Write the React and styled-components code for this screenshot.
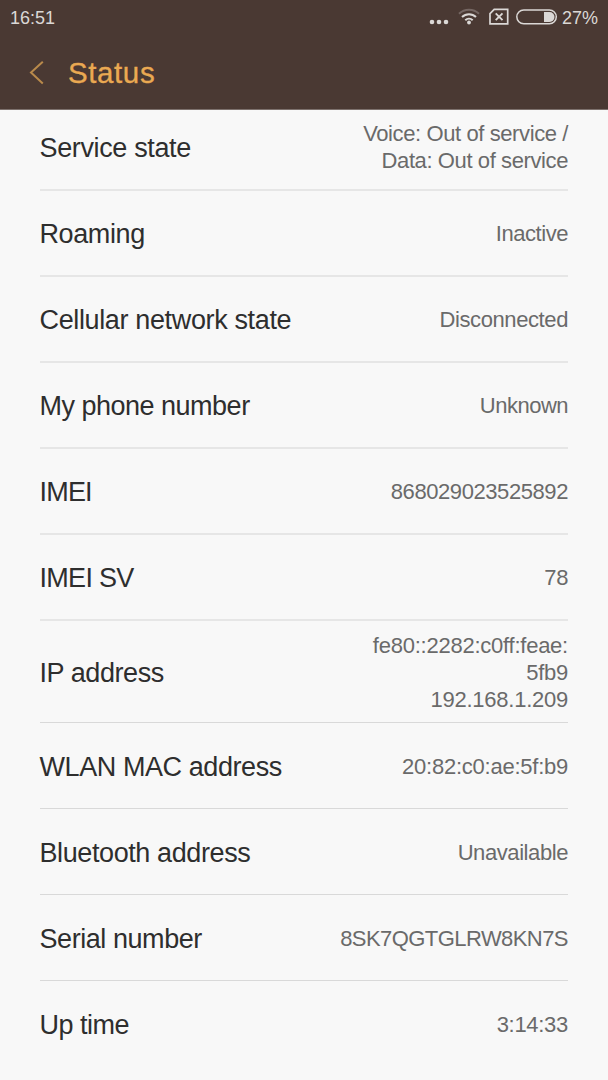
import React from "react";
import styled, { createGlobalStyle } from "styled-components";

const GlobalStyle = createGlobalStyle`
  * { box-sizing: border-box; }
  body { margin: 0; background: #f8f8f8; font-family: "Liberation Sans", Arial, sans-serif; }
`;
const Screen = styled.div`
  width: 608px;
  height: 1080px;
  overflow: hidden;
  background: #f8f8f8;
`;
const Header = styled.header`
  height: 110px;
  background: #4a3933;
  border-bottom: 1px solid #7d716d;
`;
const StatusBar = styled.div`
  height: 36px;
  padding: 0 10px;
  display: flex;
  align-items: center;
  justify-content: space-between;
  color: #dbd8d6;
  font-size: 18px;
`;
const Label = styled.span`
  white-space: nowrap;
  line-height: 20px;
`;
const Indicators = styled.div`
  display: flex;
  align-items: center;
  gap: 4px;
`;
const TitleBar = styled.div`
  height: 73px;
  display: flex;
  align-items: center;
  padding-left: 29px;
  color: #eaa952;
`;
const Title = styled.h1`
  margin: 0 0 0 23px;
  font-size: 29.5px;
  font-weight: 400;
  line-height: 34px;
  letter-spacing: 0.6px;
  white-space: nowrap;
  -webkit-text-stroke: 0.3px currentColor;
`;
const List = styled.main`
  padding: 0 40px;
`;
const Name = styled.div`
  font-size: 27px;
  line-height: 34px;
  letter-spacing: ${(p) => p.$track}px;
  color: #2e2e2e;
  white-space: nowrap;
  margin-left: -0.5px;
`;
const Value = styled.div`
  font-size: 22px;
  line-height: 27px;
  letter-spacing: ${(p) => p.$track}px;
  color: #6a6a6a;
  text-align: right;
  white-space: pre;
`;
const Row = styled.div`
  height: ${(p) => p.$height}px;
  display: flex;
  align-items: center;
  justify-content: space-between;
  padding-top: 2px;
  border-bottom: ${(p) => (p.$soft ? "2px solid #e6e6e6" : "1px solid #d9d9d9")};

  ${Value} {
    margin-bottom: ${(p) => (p.$soft ? 2 : 0)}px;
  }
  &:first-child {
    padding: 0 0 3px;
  }
  &:last-child {
    border-bottom-color: transparent;
  }
`;

const rows = [
  { name: "Service state", value: "Voice: Out of service /\nData: Out of service", height: 81, soft: true, track: [-0.36, -0.4] },
  { name: "Roaming", value: "Inactive", height: 86, soft: true, track: [-0.4, -0.45] },
  { name: "Cellular network state", value: "Disconnected", height: 86, soft: true, track: [-0.36, -0.4] },
  { name: "My phone number", value: "Unknown", height: 86, soft: true, track: [-0.5, -0.5] },
  { name: "IMEI", value: "868029023525892", height: 86, soft: true, track: [-0.8, -0.42] },
  { name: "IMEI SV", value: "78", height: 86, soft: true, track: [-0.7, -0.4] },
  { name: "IP address", value: "fe80::2282:c0ff:feae:\n5fb9\n192.168.1.209", height: 102, track: [-0.42, -0.24] },
  { name: "WLAN MAC address", value: "20:82:c0:ae:5f:b9", height: 86, track: [-0.42, -0.24] },
  { name: "Bluetooth address", value: "Unavailable", height: 86, track: [-0.4, -0.42] },
  { name: "Serial number", value: "8SK7QGTGLRW8KN7S", height: 86, track: [-0.44, -0.56] },
  { name: "Up time", value: "3:14:33", height: 86, track: [-0.5, -0.3] },
];

const StatusIcons = () => (
  <svg width="130" height="24" viewBox="428 6 130 24" fill="none" stroke="#dbd8d6">
    <g fill="#dbd8d6" stroke="none">
      <circle cx="432" cy="22" r="2.3" />
      <circle cx="439" cy="22" r="2.3" />
      <circle cx="446" cy="22" r="2.3" />
      <circle cx="469" cy="22.500" r="1.900" />
      <path d="M544 12h5.500a5 5 0 0 1 0 10H544z" />
    </g>
    <path stroke="#756763" strokeWidth="2" d="M459 13.800a14.500 14.500 0 0 1 20 0" />
    <path strokeWidth="2" d="M462 17a10 10 0 0 1 14 0M465.300 20.300a5.300 5.300 0 0 1 7.400 0" />
    <path strokeWidth="1.700" d="M494.200 9.300h13.500v14.500H490V13.700z" />
    <path strokeWidth="1.900" d="M495.700 13.300l6.800 6.800M502.500 13.300l-6.800 6.800" />
    <rect x="516.800" y="9.900" width="39.500" height="13.900" rx="6.950" strokeWidth="1.500" />
  </svg>
);

const BackIcon = () => (
  <svg width="16" height="24" viewBox="0 0 16 24" fill="none" stroke="#b98a4b" strokeWidth="2">
    <path d="M13.800 0.800L2 11.600l11.800 10.800" />
  </svg>
);

export default function App() {
  return (
    <Screen>
      <GlobalStyle />
      <Header>
        <StatusBar>
          <Label>16:51</Label>
          <Indicators>
            <StatusIcons />
            <Label>27%</Label>
          </Indicators>
        </StatusBar>
        <TitleBar>
          <BackIcon />
          <Title>Status</Title>
        </TitleBar>
      </Header>
      <List>
        {rows.map(({ name, value, height, soft, track }) => (
          <Row key={name} $height={height} $soft={soft}>
            <Name $track={track[0]}>{name}</Name>
            <Value $track={track[1]}>{value}</Value>
          </Row>
        ))}
      </List>
    </Screen>
  );
}
